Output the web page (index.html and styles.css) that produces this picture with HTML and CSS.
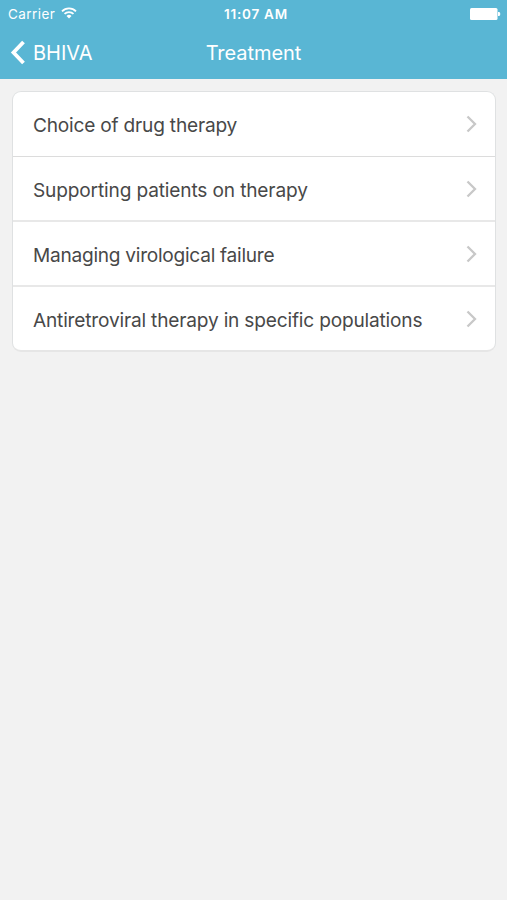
FILE: index.html
```html
<!DOCTYPE html>
<html lang="en">
<head>
<meta charset="utf-8">
<title>Treatment</title>
<link rel="stylesheet" href="styles.css">
</head>
<body>
<header class="header">
  <div class="status">
    <div class="carrier"><span class="carrier-name">Carrier</span>
      <svg class="wifi" width="16" height="12" viewBox="0 0 16 12"><path d="M1 4.300a10 10 0 0 1 14 0M3.500 6.900a6.400 6.400 0 0 1 9 0" fill="none" stroke="#fff" stroke-width="1.800"/><path d="M5.500 9a3.600 3.600 0 0 1 5 0L8 11.500z" fill="#fff"/></svg>
    </div>
    <div class="time">11:07 AM</div>
    <svg class="battery" width="31" height="12" viewBox="0 0 31 12"><rect width="27.5" height="12" rx="1.5" fill="#fff"/><path d="M28 4h1q1.300 0 1.300 2t-1.300 2h-1z" fill="#fff"/></svg>
  </div>
  <nav class="nav">
    <a class="back"><svg width="16" height="26" viewBox="0 0 16 26"><path d="M13.500 2L3.500 12.500l10 10.500" fill="none" stroke="#fff" stroke-width="3.800"/></svg><span class="back-label">BHIVA</span></a>
    <h1 class="title">Treatment</h1>
  </nav>
</header>
<main class="list">
  <a class="row"><span class="label choice">Choice of drug therapy</span><svg class="chevron" width="12" height="18" viewBox="0 0 12 18"><path d="M2.500 1.500L10 9l-7.500 7.500"/></svg></a>
  <a class="row"><span class="label support">Supporting patients on therapy</span><svg class="chevron" width="12" height="18" viewBox="0 0 12 18"><path d="M2.500 1.500L10 9l-7.500 7.500"/></svg></a>
  <a class="row"><span class="label failure">Managing virological failure</span><svg class="chevron" width="12" height="18" viewBox="0 0 12 18"><path d="M2.500 1.500L10 9l-7.500 7.500"/></svg></a>
  <a class="row"><span class="label populations">Antiretroviral therapy in specific populations</span><svg class="chevron" width="12" height="18" viewBox="0 0 12 18"><path d="M2.500 1.500L10 9l-7.500 7.500"/></svg></a>
</main>
</body>
</html>
```
FILE: styles.css
```css
* { box-sizing: border-box; }
body { margin: 0; min-height: 900px; background: #f2f2f2; font-family: Inter, "Liberation Sans", sans-serif; color: #484848; }
.header { height: 79px; background: #59b6d4; color: #fff; }
.status { display: grid; grid-template-columns: 1fr auto 1fr; align-items: center; height: 27px; padding: 0 6px 0 8px; }
.carrier { display: flex; align-items: center; gap: 6px; font-size: 13.5px; letter-spacing: .45px; }
.wifi { margin-top: -2px; }
.time { font-size: 13.5px; font-weight: 600; letter-spacing: .75px; padding-left: 3px; }
.battery { justify-self: end; }
.nav { display: grid; grid-template-columns: 1fr auto 1fr; align-items: center; height: 51px; padding: 0 10px; }
.back { display: flex; align-items: center; gap: 7px; font-size: 20px; }
.title { margin: 0; font-size: 20px; font-weight: 400; letter-spacing: -.05px; }
.list { margin: 12px 11px 0 12px; border: 1px solid #dfe1e2; border-bottom: 2px solid #e6e6e6; border-radius: 9px; background: #fff; }
.row { display: flex; align-items: center; justify-content: space-between; height: 65px; padding: 0 18px 0 20px; border-bottom: 2px solid #e8e8e8; font-size: 19.1px; }
.row:first-child { border-bottom: 1px solid #dcdcdc; }
.row:last-child { border-bottom: 0; height: 63px; }
.label { white-space: nowrap; padding-top: 2px; }
.choice { letter-spacing: -.2px; }
.support { letter-spacing: -.15px; }
.failure { letter-spacing: -.26px; }
.populations { letter-spacing: -.18px; }
.chevron path { fill: none; stroke: #c8c8c8; stroke-width: 2.3; }
```
